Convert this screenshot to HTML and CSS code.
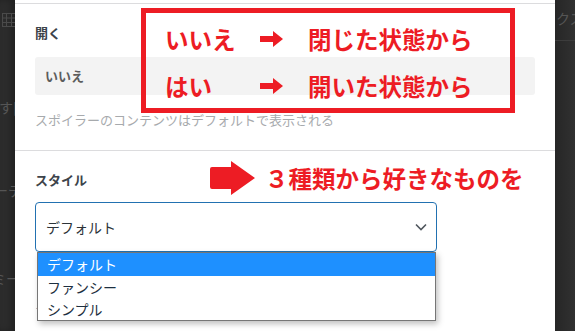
FILE: index.html
```html
<!DOCTYPE html>
<html>
	<head>
		<meta charset="utf-8">
		<title>スポイラー設定</title>
		<link rel="stylesheet" href="styles.css">
	</head>
	<body>
		<div class="screen">
			<div class="side side-left">
				<svg class="ghost-icon" width="14" height="14" viewBox="0 0 14 14">
					<rect x="0.5" y="0.5" width="13" height="13" fill="none" stroke="#4a4a4a"/>
					<path d="M0 5h14M0 9.5h14M4.5 0v14M9.5 0v14" stroke="#4a4a4a"/>
				</svg>
				<p class="ghost g1">す[</p>
				<p class="ghost g2">ーテ</p>
				<p class="ghost g3">ミー</p>
			</div>

			<div class="panel">
				<div class="section first">
					<p class="label">開く</p>
					<div class="field">いいえ</div>
					<p class="help">スポイラーのコンテンツはデフォルトで表示される</p>
				</div>
				<div class="section">
					<p class="label">スタイル</p>
					<div class="select">
						<span>デフォルト</span>
						<svg width="12" height="8" viewBox="0 0 12 8"><path d="M1 1.5l5 5 5-5" fill="none" stroke="#50575e" stroke-width="1.6"/></svg>
					</div>
					<p class="link">スタイルについて</p>
				</div>

				<ul class="options">
					<li class="option active">デフォルト</li>
					<li class="option">ファンシー</li>
					<li class="option">シンプル</li>
				</ul>

				<!-- 注釈 -->
				<div class="note-box">
					<div class="note-row">
						<span>いいえ</span>
						<svg width="23" height="16" viewBox="0 0 23 16"><path d="M0 5h13V0l10 8-10 8v-5H0z" fill="#ed1c24"/></svg>
						<span>閉じた状態から</span>
					</div>
					<div class="note-row">
						<span>はい</span>
						<svg width="23" height="16" viewBox="0 0 23 16"><path d="M0 5h13V0l10 8-10 8v-5H0z" fill="#ed1c24"/></svg>
						<span>開いた状態から</span>
					</div>
				</div>
				<div class="note-line">
					<svg width="45" height="34" viewBox="0 0 45 34"><path d="M2 6h19V0l24 17-24 17v-6H2q-2 0-2-2V8q0-2 2-2z" fill="#ed1c24"/></svg>
					<span>３種類から好きなものを</span>
				</div>
			</div>

			<div class="side side-right">
				<p class="ghost g4">クス</p>
				<div class="ghost-line"></div>
			</div>
		</div>
	</body>
</html>
```

FILE: styles.css
```css
*{
	margin: 0;
	padding: 0;
}
body{
	font-family: "Noto Sans CJK JP", "Noto Sans", sans-serif;
	background-color: #2c2c2c;
}
.screen{
	display: flex;
	width: 575px;
	height: 331px;
	overflow: hidden;
}
.side{
	position: relative;
	overflow: hidden;
	background-color: #2c2c2c;
}
.side-left{
	width: 15px;
	box-shadow: inset -4px 0 6px rgba(0,0,0,0.25);
}
.side-right{
	width: 20px;
	background: linear-gradient(to right, #262626, #313131);
}
.ghost-icon{
	position: absolute;
	left: 2px;
	top: 13px;
}
.ghost{
	position: absolute;
	font-size: 14px;
	line-height: 20px;
	color: #555;
	white-space: nowrap;
}
.g1{ left: -1px; top: 97px; }
.g2{ left: -6px; top: 180px; }
.g3{ left: -8px; top: 268px; }
.g4{ left: 1px; top: 8px; }
.ghost-line{
	position: absolute;
	left: 0;
	right: 0;
	top: 40px;
	height: 1px;
	background-color: #3c3c3c;
}

.panel{
	position: relative;
	width: 540px;
	background-color: #fff;
	padding-top: 3px;
}
.section{
	border-top: 1px solid #dcdcde;
	padding: 19px 20px 20px 20px;
}
.section:last-of-type{
	height: 176px;
	border-bottom: 1px solid #dcdcde;
	padding-bottom: 0;
	box-sizing: border-box;
}
.label{
	font-size: 13px;
	line-height: 20px;
	font-weight: 700;
	color: #3c434a;
}
.field{
	margin-top: 14px;
	height: 38px;
	line-height: 38px;
	padding-left: 10px;
	background-color: #f3f3f3;
	border-radius: 3px;
	font-size: 13px;
	font-weight: 700;
	color: #5c5c5c;
}
.help{
	margin-top: 15px;
	font-size: 13px;
	line-height: 20px;
	color: #a7aaad;
}
.select{
	margin-top: 12px;
	width: 402px;
	height: 50px;
	box-sizing: border-box;
	border: 1.5px solid #2271b1;
	border-radius: 4px;
	display: flex;
	align-items: center;
	justify-content: space-between;
	padding: 0 9px 0 10px;
	font-size: 14px;
	color: #2c3338;
}
.link{
	margin-top: 41px;
	font-size: 13px;
	line-height: 20px;
	color: #2271b1;
}

.options{
	list-style: none;
	position: absolute;
	left: 22px;
	top: 252px;
	width: 399px;
	box-sizing: border-box;
	border: 1px solid #767676;
	background-color: #fff;
	box-shadow: 2px 3px 6px rgba(0,0,0,0.25);
}
.option{
	height: 22px;
	line-height: 22px;
	padding-left: 9px;
	font-size: 14px;
	color: #1d2f40;
}
.option.active{
	height: 23px;
	line-height: 23px;
	background-color: #1e90ff;
	color: #fff;
}

.note-box{
	position: absolute;
	left: 126px;
	top: 8px;
	width: 374px;
	height: 105px;
	box-sizing: border-box;
	border: 5px solid #ed1c24;
	padding: 2px 0 0 19px;
}
.note-row{
	display: grid;
	grid-template-columns: 95px 48px auto;
	align-items: center;
	height: 47px;
	font-size: 23.5px;
	font-weight: 700;
	color: #ed1c24;
	white-space: nowrap;
}
.note-line{
	position: absolute;
	left: 195px;
	top: 161px;
	display: flex;
	align-items: center;
	gap: 10px;
	font-size: 23.5px;
	font-weight: 700;
	color: #ed1c24;
	white-space: nowrap;
}
```
